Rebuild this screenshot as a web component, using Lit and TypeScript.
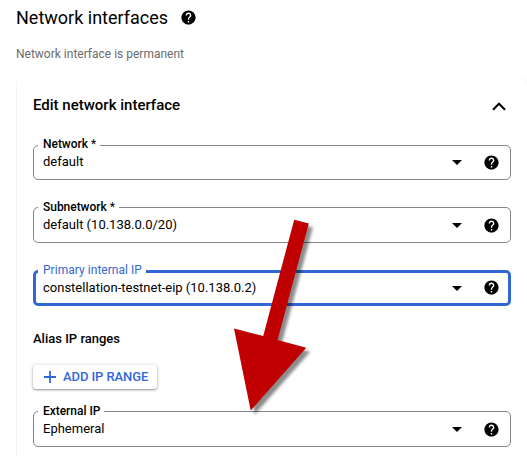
import { LitElement, html, css } from "lit";
import { customElement, property } from "lit/decorators.js";

@customElement("help-icon")
class HelpIcon extends LitElement {
  static styles = css`
    :host { display: grid; place-items: center; width: 18px; height: 18px; }
    svg { display: block; width: 17px; height: 17px; }
  `;
  render() {
    return html`<svg viewBox="0 0 24 24"><path d="M12 2C6.48 2 2 6.48 2 12s4.48 10 10 10 10-4.48 10-10S17.52 2 12 2zm1 17h-2v-2h2v2zm2.07-7.75l-.9.92C13.45 12.9 13 13.5 13 15h-2v-.5c0-1.1.45-2.1 1.17-2.83l1.24-1.26c.37-.36.59-.86.59-1.41 0-1.1-.9-2-2-2s-2 .9-2 2H8c0-2.21 1.79-4 4-4s4 1.79 4 4c0 .88-.36 1.68-.93 2.25z"/></svg>`;
  }
}

@customElement("select-field")
class SelectField extends LitElement {
  @property() label = "";
  @property() value = "";
  @property({ type: Boolean }) required = false;
  @property({ type: Boolean, reflect: true }) focused = false;
  @property({ type: Boolean, reflect: true }) compact = false;
  static styles = css`
    :host { display: block; height: 36px; color: #000; }
    :host([compact]) { height: 35px; }
    .box { position: relative; box-sizing: border-box; height: 100%; border: 1px solid #80868b; border-radius: 5px;
      display: flex; align-items: center; padding: 0 10px 0 9px; }
    :host([focused]) .box { border: 3px solid #3367d6; padding: 0 8px 0 7px; }
    .label { position: absolute; left: 4px; top: -9px; padding: 0 4px 0 5px; background: #fff;
      font-size: 12px; line-height: 16px; font-weight: 500; letter-spacing: -0.03px; white-space: pre; }
    .star { font-weight: 400; }
    :host([compact]) .label { top: -10px; }
    :host([focused]) .label { left: 2px; top: -11px; color: #3367d6; font-weight: 400; letter-spacing: 0.04px; }
    .value { flex: 1; font-size: 13px; line-height: 18px; white-space: pre; }
    :host([compact]) .value { margin-top: -2px; }
    .caret { width: 10px; height: 5px; margin-right: 20px; display: block; }
    :host([compact]) help-icon { margin-bottom: 1px; }
    :host([focused]) help-icon { margin-bottom: 2px; }
  `;
  render() {
    return html`<div class="box">
      <span class="label">${this.label}${this.required ? html`<span class="star"> *</span>` : ""}</span>
      <span class="value">${this.value}</span>
      <svg class="caret" viewBox="0 0 10 5"><path d="M0 0h10L5 5z"/></svg>
      <help-icon></help-icon>
    </div>`;
  }
}

@customElement("app-root")
class AppRoot extends LitElement {
  static styles = css`
    :host { display: block; position: relative; width: 527px; height: 456px; overflow: hidden; background: #fff;
      font-family: Roboto, "Liberation Sans", sans-serif; color: #000; }
    .title { display: flex; align-items: center; height: 24px; padding: 5px 0 0 16px; gap: 11px; }
    h1 { margin: 2px 0 0; font-size: 18px; line-height: 24px; font-weight: 400; white-space: nowrap; }
    .note { margin: 16px 0 0 16px; font-size: 12px; line-height: 18px; color: #6b6b6b; }
    .card { box-sizing: border-box; margin: 16px 0 0 17px; height: 400px; padding: 0 16px; border-radius: 4px;
      box-shadow: 0 0 1px rgba(0,0,0,.1), 0 1px 2px rgba(0,0,0,.12); }
    .head { display: flex; justify-content: space-between; align-items: center; height: 52px; padding-right: 5px; }
    h2 { margin: 0; font-size: 15px; line-height: 20px; font-weight: 500; }
    .chevron { width: 14px; height: 9px; margin-top: 2px; }
    .first { margin-top: 14px; }
    .gap { margin-top: 27px; }
    h3 { margin: 24px 0 0; font-size: 13px; line-height: 18px; font-weight: 500; }
    button { display: flex; align-items: center; gap: 7px; box-sizing: border-box; width: 124px; height: 24px; margin: 17px 0 22px;
      padding: 0 0 0 11px; border: 0; border-radius: 3px; background: #fff; color: #3367d6;
      font: 500 13px/24px Roboto, "Liberation Sans", sans-serif; letter-spacing: -0.08px; white-space: nowrap;
      box-shadow: 0 1px 2px rgba(0,0,0,.38), 0 0 4px rgba(0,0,0,.14); }
    .plus { width: 12px; height: 12px; }
    .arrow { position: absolute; left: 0; top: 0; width: 527px; height: 456px; pointer-events: none;
      filter: drop-shadow(4px 4px 1.5px rgba(0,0,0,.45)); }
  `;
  render() {
    return html`
      <div class="title"><h1>Network interfaces</h1><help-icon></help-icon></div>
      <div class="note"><span>Network interface is permanent</span></div>
      <section class="card">
        <div class="head">
          <h2>Edit network interface</h2>
          <svg class="chevron" viewBox="0 0 14 9"><path d="M1 7.7L7 1.7l6 6" fill="none" stroke="#000" stroke-width="2"/></svg>
        </div>
        <select-field class="first" compact required label="Network" value="default"></select-field>
        <select-field class="gap" required label="Subnetwork" value="default (10.138.0.0/20)"></select-field>
        <select-field class="gap" focused label="Primary internal IP" value="constellation-testnet-eip (10.138.0.2)"></select-field>
        <h3>Alias IP ranges</h3>
        <button><svg class="plus" viewBox="0 0 12 12"><path d="M6 0v12M0 6h12" stroke="#3367d6" stroke-width="1.8"/></svg><span>ADD IP RANGE</span></button>
        <select-field label="External IP" value="Ephemeral"></select-field>
      </section>
      <svg class="arrow" viewBox="0 0 527 456"><path fill="#c00000" d="M294.2 219.7L308.8 223.5 277.6 340 306.2 347.8 250.7 410.6 234 328.5 263.2 336z"/></svg>
    `;
  }
}
